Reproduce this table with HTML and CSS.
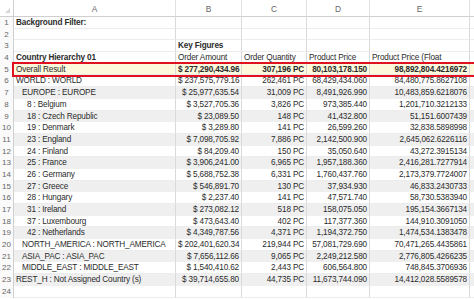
FILE: index.html
```html
<!DOCTYPE html>
<html lang="en">
<head>
  <meta charset="UTF-8" />
  <title>Country Hierarchy</title>
  <link rel="stylesheet" href="styles.css">
</head>
<body>
  <div class="sheet">
    <div class="row head">
      <div class="rn corner"><span class="tri"></span></div>
      <div class="cells"><div>A</div><div>B</div><div>C</div><div>D</div><div>E</div><div></div></div>
    </div>
    <div class="row"><div class="rn">1</div><div class="cells"><div class="b">Background Filter:</div><div></div><div></div><div></div><div></div><div></div></div></div>
    <div class="row"><div class="rn">2</div><div class="cells"><div></div><div></div><div></div><div></div><div></div><div></div></div></div>
    <div class="row"><div class="rn">3</div><div class="cells"><div></div><div class="b">Key Figures</div><div></div><div></div><div></div><div></div></div></div>
    <div class="row"><div class="rn">4</div><div class="cells"><div class="b">Country Hierarchy 01</div><div>Order Amount</div><div>Order Quantity</div><div>Product Price</div><div>Product Price (Float</div><div></div></div></div>
    <div class="row total"><div class="rn">5</div><div class="cells"><div>Overall Result</div><div class="n b">$ 277,290,434.96</div><div class="n b">307,196 PC</div><div class="n b">80,103,178.150</div><div class="n b">98,892,804.4216972</div><div></div></div></div>
    <div class="row"><div class="rn">6</div><div class="cells"><div>WORLD : WORLD</div><div class="n">$ 237,575,779.16</div><div class="n">262,461 PC</div><div class="n">68,429,434.060</div><div class="n">84,480,775.8627108</div><div></div></div></div>
    <div class="row alt"><div class="rn">7</div><div class="cells"><div class="i1">EUROPE : EUROPE</div><div class="n">$ 25,977,635.54</div><div class="n">31,009 PC</div><div class="n">8,491,926.990</div><div class="n">10,483,859.6218076</div><div></div></div></div>
    <div class="row"><div class="rn">8</div><div class="cells"><div class="i2">8 : Belgium</div><div class="n">$ 3,527,705.36</div><div class="n">3,826 PC</div><div class="n">973,385.440</div><div class="n">1,201,710.3212133</div><div></div></div></div>
    <div class="row alt"><div class="rn">9</div><div class="cells"><div class="i2">18 : Czech Republic</div><div class="n">$ 23,089.50</div><div class="n">148 PC</div><div class="n">41,432.800</div><div class="n">51,151.6007439</div><div></div></div></div>
    <div class="row"><div class="rn">10</div><div class="cells"><div class="i2">19 : Denmark</div><div class="n">$ 3,289.80</div><div class="n">141 PC</div><div class="n">26,599.260</div><div class="n">32,838.5898998</div><div></div></div></div>
    <div class="row alt"><div class="rn">11</div><div class="cells"><div class="i2">23 : England</div><div class="n">$ 7,098,705.92</div><div class="n">7,886 PC</div><div class="n">2,142,500.900</div><div class="n">2,645,062.6226116</div><div></div></div></div>
    <div class="row"><div class="rn">12</div><div class="cells"><div class="i2">24 : Finland</div><div class="n">$ 84,209.40</div><div class="n">150 PC</div><div class="n">35,050.640</div><div class="n">43,272.3915134</div><div></div></div></div>
    <div class="row alt"><div class="rn">13</div><div class="cells"><div class="i2">25 : France</div><div class="n">$ 3,906,241.00</div><div class="n">6,965 PC</div><div class="n">1,957,188.360</div><div class="n">2,416,281.7277914</div><div></div></div></div>
    <div class="row"><div class="rn">14</div><div class="cells"><div class="i2">26 : Germany</div><div class="n">$ 5,688,752.38</div><div class="n">6,331 PC</div><div class="n">1,760,437.760</div><div class="n">2,173,379.7724007</div><div></div></div></div>
    <div class="row alt"><div class="rn">15</div><div class="cells"><div class="i2">27 : Greece</div><div class="n">$ 546,891.70</div><div class="n">130 PC</div><div class="n">37,934.930</div><div class="n">46,833.2430733</div><div></div></div></div>
    <div class="row"><div class="rn">16</div><div class="cells"><div class="i2">28 : Hungary</div><div class="n">$ 2,237.40</div><div class="n">141 PC</div><div class="n">47,571.740</div><div class="n">58,730.5383940</div><div></div></div></div>
    <div class="row alt"><div class="rn">17</div><div class="cells"><div class="i2">31 : Ireland</div><div class="n">$ 273,082.12</div><div class="n">518 PC</div><div class="n">158,075.050</div><div class="n">195,154.3667134</div><div></div></div></div>
    <div class="row"><div class="rn">18</div><div class="cells"><div class="i2">37 : Luxembourg</div><div class="n">$ 473,643.40</div><div class="n">402 PC</div><div class="n">117,377.360</div><div class="n">144,910.3091050</div><div></div></div></div>
    <div class="row alt"><div class="rn">19</div><div class="cells"><div class="i2">42 : Netherlands</div><div class="n">$ 4,349,787.56</div><div class="n">4,371 PC</div><div class="n">1,194,372.750</div><div class="n">1,474,534.1383478</div><div></div></div></div>
    <div class="row"><div class="rn">20</div><div class="cells"><div class="i1">NORTH_AMERICA : NORTH_AMERICA</div><div class="n">$ 202,401,620.34</div><div class="n">219,944 PC</div><div class="n">57,081,729.690</div><div class="n">70,471,265.4435861</div><div></div></div></div>
    <div class="row alt"><div class="rn">21</div><div class="cells"><div class="i1">ASIA_PAC : ASIA_PAC</div><div class="n">$ 7,656,112.66</div><div class="n">9,065 PC</div><div class="n">2,249,212.580</div><div class="n">2,776,805.4266235</div><div></div></div></div>
    <div class="row"><div class="rn">22</div><div class="cells"><div class="i1">MIDDLE_EAST : MIDDLE_EAST</div><div class="n">$ 1,540,410.62</div><div class="n">2,443 PC</div><div class="n">606,564.800</div><div class="n">748,845.3706936</div><div></div></div></div>
    <div class="row alt"><div class="rn">23</div><div class="cells"><div>REST_H : Not Assigned Country (s)</div><div class="n">$ 39,714,655.80</div><div class="n">44,735 PC</div><div class="n">11,673,744.090</div><div class="n">14,412,028.5589578</div><div></div></div></div>
    <div class="row"><div class="rn">24</div><div class="cells"><div></div><div></div><div></div><div></div><div></div><div></div></div></div>
  </div>
</body>
</html>
```

FILE: styles.css
```css
* {
  box-sizing: border-box;
}
body {
  margin: 0;
  background: #ffffff;
  font-family: 'Liberation Sans', Arial, sans-serif;
  font-size: 8.2px;
  letter-spacing: -0.15px;
  color: #2b2b2b;
}

.sheet {
  width: 474px;
  overflow: hidden;
}

.row {
  display: flex;
  height: 11.7px;
}
.row.head {
  height: 17px;
}

.rn {
  width: 14px;
  flex: none;
  text-align: center;
  color: #666;
  background: #fafafa;
  border-right: 1px solid #d0d0d0;
  line-height: 12px;
  font-size: 8px;
  letter-spacing: 0;
}

.cells {
  display: grid;
  grid-template-columns: 162px 66px 65px 63px 100px 20px;
  flex: none;
}
.cells > div {
  border-right: 1px solid #d9d9d9;
  border-bottom: 1px solid #ececec;
  padding: 0 2px;
  line-height: 11.8px;
  white-space: nowrap;
  overflow: hidden;
}

.head .rn,
.head .cells > div {
  background: #ffffff;
  border-bottom: 1px solid #cfcfcf;
  line-height: 19px;
  text-align: center;
  color: #666;
  font-size: 8.4px;
}
.head .cells > div {
  border-right-color: #e2e2e2;
}
.corner {
  position: relative;
}
.tri {
  position: absolute;
  right: 3px;
  bottom: 3px;
  width: 0;
  height: 0;
  border-left: 5px solid transparent;
  border-bottom: 5px solid #d6d6d6;
}

.b {
  font-weight: bold;
}
.n {
  text-align: right;
}
.i1 {
  padding-left: 8px !important;
}
.i2 {
  padding-left: 13px !important;
}

.alt .cells > div {
  background: #efefef;
  border-bottom-color: #efefef;
}

.total .cells {
  position: relative;
  z-index: 1;
}
.total .cells::after {
  content: "";
  position: absolute;
  left: -2px;
  top: -2px;
  width: 460px;
  bottom: -2px;
  border: 2px solid #e0121f;
}
.total .cells > div {
  background: #fdf9dc;
}
```
